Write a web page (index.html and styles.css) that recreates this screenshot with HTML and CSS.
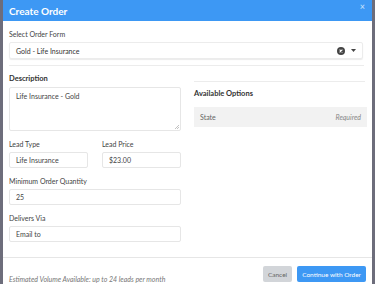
FILE: index.html
```html
<!DOCTYPE html>
<html>
<head>
<meta charset="utf-8">
<link rel="stylesheet" href="styles.css">
</head>
<body>
<div class="modal">
  <div class="header">
    <span class="title">Create Order</span>
    <span class="close">×</span>
  </div>
  <div class="body">
    <div class="label">Select Order Form</div>
    <div class="select">
      <span>Gold - Life Insurance</span>
      <span class="select-icons">
        <svg class="clear" width="8" height="8" viewBox="0 0 8 8"><circle cx="4" cy="4" r="4" fill="#444"/><path d="M2.6 2.6 L5.4 5.4 M5.4 2.6 L2.6 5.4" stroke="#fff" stroke-width="1.1"/></svg>
        <svg class="caret" width="5" height="3" viewBox="0 0 5 3"><path d="M0 0 H5 L2.5 3 Z" fill="#444"/></svg>
      </span>
    </div>
    <div class="divider"></div>
    <div class="cols">
      <div class="col-left">
        <div class="heading">Description</div>
        <div class="textarea">Life Insurance - Gold
          <svg class="grip" width="5" height="5" viewBox="0 0 5 5"><path d="M5 1 L1 5 M5 3 L3 5" stroke="#999" stroke-width="0.6"/></svg>
        </div>
        <div class="pair">
          <div class="field">
            <div class="label">Lead Type</div>
            <div class="input">Life Insurance</div>
          </div>
          <div class="field">
            <div class="label">Lead Price</div>
            <div class="input">$23.00</div>
          </div>
        </div>
        <div class="label">Minimum Order Quantity</div>
        <div class="input">25</div>
        <div class="label">Delivers Via</div>
        <div class="input">Email to</div>
      </div>
      <div class="col-right">
        <div class="rdivider"></div>
        <div class="heading">Available Options</div>
        <div class="option">
          <span>State</span>
          <span class="req">Required</span>
        </div>
      </div>
    </div>
  </div>
  <div class="footer">
    <span class="estimate">Estimated Volume Available: up to 24 leads per month</span>
    <div class="buttons">
      <span class="btn cancel">Cancel</span>
      <span class="btn primary">Continue with Order</span>
    </div>
  </div>
</div>
</body>
</html>
```
FILE: styles.css
```css
html, body {
  margin: 0;
  padding: 0;
  height: 100%;
}
body {
  background: #6d6d7b;
  font-family: Lato, "Open Sans", sans-serif;
  color: #333;
  overflow: hidden;
}
.modal {
  margin: 0 3px;
  height: 284px;
  background: #fff;
  display: flex;
  flex-direction: column;
}
.header {
  background: #3d98f4;
  height: 21px;
  display: flex;
  align-items: center;
  justify-content: space-between;
  padding: 0 7px 0 6px;
  box-sizing: border-box;
}
.title {
  color: #fff;
  font-weight: 700;
  font-size: 10px;
}
.close {
  color: #cfe4fb;
  font-size: 9px;
  align-self: flex-start;
  margin-top: 1px;
}
.body {
  padding: 8px 8px 0 6px;
}
.label {
  font-size: 7px;
  color: #444;
  line-height: 10px;
}
.body > .label {
  margin-bottom: 3px;
}
.select {
  height: 17px;
  border: 1px solid #ececec;
  border-radius: 2px;
  box-shadow: 0 1px 1px rgba(0,0,0,0.08);
  display: flex;
  align-items: center;
  justify-content: space-between;
  padding: 0 6px 0 6px;
  font-size: 7px;
  color: #333;
  box-sizing: border-box;
  margin-right: 1px;
}
.select-icons {
  display: flex;
  align-items: center;
  gap: 6px;
}
.divider {
  height: 1px;
  background: #ececec;
  margin-top: 6px;
}
.cols {
  display: grid;
  grid-template-columns: 172px 171px;
  column-gap: 13px;
}
.heading {
  font-size: 7.5px;
  font-weight: 700;
  color: #333;
  line-height: 10px;
}
.col-left .heading {
  margin-top: 8px;
  margin-bottom: 3px;
}
.textarea {
  position: relative;
  height: 44px;
  border: 1px solid #e6e6e6;
  border-radius: 2px;
  box-sizing: border-box;
  padding: 3px 6px;
  font-size: 7px;
  color: #444;
  line-height: 10px;
}
.grip {
  position: absolute;
  right: 1px;
  bottom: 1px;
}
.pair {
  display: grid;
  grid-template-columns: 79px 79px;
  column-gap: 14px;
}
.col-left .label {
  margin-top: 8px;
  margin-bottom: 3px;
}
.input {
  height: 16px;
  border: 1px solid #e6e6e6;
  border-radius: 2px;
  box-sizing: border-box;
  display: flex;
  align-items: center;
  padding: 0 6px;
  font-size: 7px;
  color: #444;
}
.rdivider {
  height: 1px;
  background: #ececec;
  margin-top: 15px;
}
.col-right .heading {
  margin-top: 7px;
}
.option {
  margin-top: 8px;
  height: 20px;
  background: #f2f2f2;
  display: flex;
  align-items: center;
  justify-content: space-between;
  padding: 0 6px;
  font-size: 7px;
  color: #666;
  margin-right: -2px;
}
.req {
  font-style: italic;
  color: #888;
}
.footer {
  margin-top: auto;
  border-top: 1px solid #e6e6e6;
  height: 27px;
  box-sizing: border-box;
  display: flex;
  justify-content: space-between;
  align-items: flex-start;
  padding: 8px 6px 0 6px;
}
.estimate {
  font-size: 7px;
  font-style: italic;
  color: #777;
  margin-top: 9px;
}
.buttons {
  display: flex;
  gap: 5px;
}
.btn {
  height: 16px;
  display: flex;
  align-items: center;
  padding: 0 5px;
  font-size: 6.5px;
  border-radius: 2px;
}
.cancel {
  background: #d2d5d9;
  color: #666;
}
.primary {
  background: #3d98f4;
  color: #fff;
}
```
